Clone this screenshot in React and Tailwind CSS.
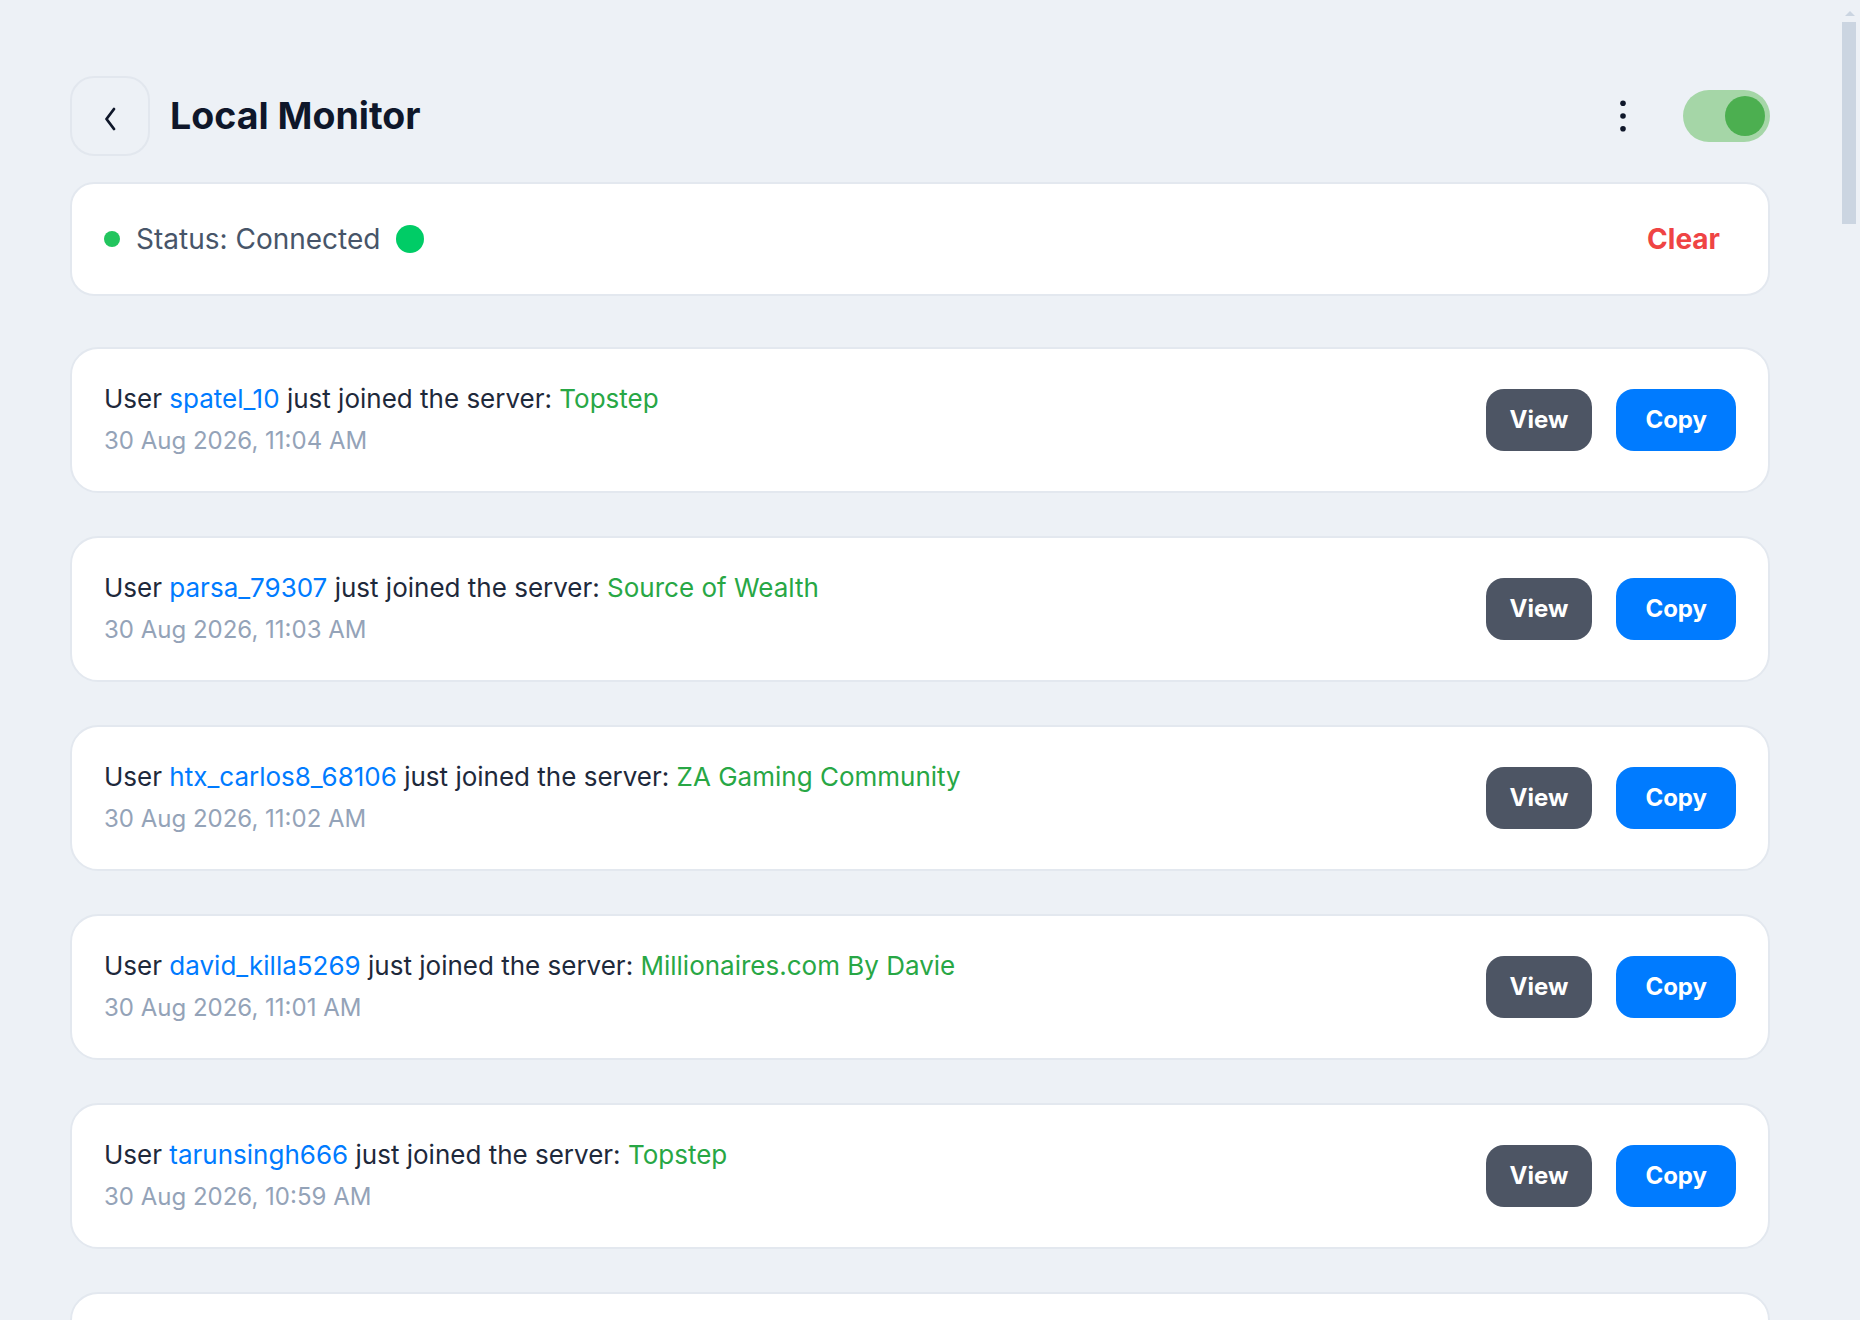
import { useState } from "react";

// newest joins first: [username, server, minutes since midnight]
const RECENT = [
  ["spatel_10", "Topstep", 664],
  ["parsa_79307", "Source of Wealth", 663],
  ["htx_carlos8_68106", "ZA Gaming Community", 662],
  ["david_killa5269", "Millionaires.com By Davie", 661],
  ["tarunsingh666", "Topstep", 659],
];

const OLDER_USERS = [
  "kira.vance",
  "mo_trades42",
  "lucasferreira_",
  "jd_walker88",
  "nina_k03",
  "alphawolf_77",
  "ryan.codes",
  "theo_m1991",
  "sam_patel21",
  "quietstorm_9",
  "max_rivera",
  "zoe.lin",
];

const OLDER_SERVERS = [
  "Topstep",
  "Source of Wealth",
  "ZA Gaming Community",
  "Millionaires.com By Davie",
  "Day Trading Hub",
  "Crypto Circle",
  "Night Owls",
];

const formatTime = (m) => {
  const h = Math.floor(m / 60);
  const mm = String(m % 60).padStart(2, "0");
  const h12 = h % 12 || 12;
  return `30 Aug 2026, ${h12}:${mm} ${h >= 12 ? "PM" : "AM"}`;
};

const EVENTS = [
  ...RECENT,
  ...Array.from({ length: 37 }, (_, i) => [
    OLDER_USERS[i % OLDER_USERS.length],
    OLDER_SERVERS[(i * 3) % OLDER_SERVERS.length],
    657 - i * 2,
  ]),
].map(([user, server, minute], i) => ({
  id: i,
  user,
  server,
  time: formatTime(minute),
}));

function JoinCard({ event }) {
  return (
    <div className="flex items-center justify-between rounded-[28px] border-2 border-[#e3e8ef] bg-white px-8 py-8">
      <div className="flex flex-col gap-[6px] leading-[36px]">
        <p className="text-[26px] text-[#1e293b]">
          User <span className="text-[#007bff]">{event.user}</span> just joined
          the server: <span className="text-[#28a745]">{event.server}</span>
        </p>
        <p className="text-[24px] text-[#94a3b8]">{event.time}</p>
      </div>
      <div className="flex items-center gap-6">
        <button className="h-[62px] rounded-[18px] bg-[#4d5564] px-6 text-[24px] font-bold text-white">
          View
        </button>
        <button className="h-[62px] rounded-[18px] bg-[#007bff] px-[29px] text-[24px] font-bold text-white">
          Copy
        </button>
      </div>
    </div>
  );
}

// thin rail on the right standing in for the page scrollbar
function ScrollRail() {
  return (
    <div className="flex w-[20px] shrink-0 flex-col items-center">
      <span className="mt-[11px] h-0 w-0 border-x-[5px] border-b-[5px] border-x-transparent border-b-[#cbd5e1]" />
      <span className="mt-[6px] mr-[2px] h-[202px] w-[14px] bg-[#cbd5e1]" />
    </div>
  );
}

export default function App() {
  const [enabled, setEnabled] = useState(true);

  return (
    <div className="flex h-screen bg-[#edf1f6] font-['Inter',sans-serif]">
      <main className="flex-1 overflow-y-auto [scrollbar-width:none]">
        <div className="mx-auto w-[1700px] pt-[76px] pb-[76px]">
          <header className="flex items-center justify-between">
            <div className="flex items-center gap-5">
              <button className="flex h-20 w-20 items-center justify-center rounded-3xl border-2 border-[#e2e7ee]">
                <svg width="14" height="24" viewBox="0 0 14 24" className="mt-[6px]">
                  <path
                    d="M11 2 L3.5 12 L11 22"
                    fill="none"
                    stroke="#0f172a"
                    strokeWidth="2.8"
                    strokeLinecap="round"
                    strokeLinejoin="round"
                  />
                </svg>
              </button>
              <h1 className="text-[37.5px] font-bold text-[#0f172a]">
                Local Monitor
              </h1>
            </div>
            <div className="flex items-center gap-10">
              <button className="flex h-10 w-10 items-center justify-center">
                <svg width="6" height="32" viewBox="0 0 6 32">
                  <circle cx="3" cy="3.3" r="2.8" fill="#0f172a" />
                  <circle cx="3" cy="16" r="2.8" fill="#0f172a" />
                  <circle cx="3" cy="28.7" r="2.8" fill="#0f172a" />
                </svg>
              </button>
              <button
                onClick={() => setEnabled(!enabled)}
                className={`flex h-[52px] w-[87px] items-center rounded-full px-[5px] ${
                  enabled ? "justify-end bg-[#a5d6a7]" : "justify-start bg-[#cbd5e1]"
                }`}
              >
                <span
                  className={`h-10 w-10 rounded-full ${
                    enabled ? "bg-[#4caf50]" : "bg-white"
                  }`}
                />
              </button>
            </div>
          </header>

          <section className="mt-[26px] flex items-center justify-between rounded-3xl border-2 border-[#e3e8ef] bg-white px-8 py-[34px]">
            <div className="flex items-center gap-4">
              <span className="h-4 w-4 rounded-full bg-[#22c55e]" />
              <span className="text-[28px] leading-[42px] text-[#475569]">
                Status: Connected
              </span>
              <span className="h-7 w-7 rounded-full bg-[#00cc66]" />
            </div>
            <button className="px-4 text-[28px] font-bold leading-[42px] text-[#ef4444]">
              Clear
            </button>
          </section>

          <div className="mt-[51px] flex flex-col gap-[43px]">
            {EVENTS.map((event) => (
              <JoinCard key={event.id} event={event} />
            ))}
          </div>
        </div>
      </main>
      <ScrollRail />
    </div>
  );
}
